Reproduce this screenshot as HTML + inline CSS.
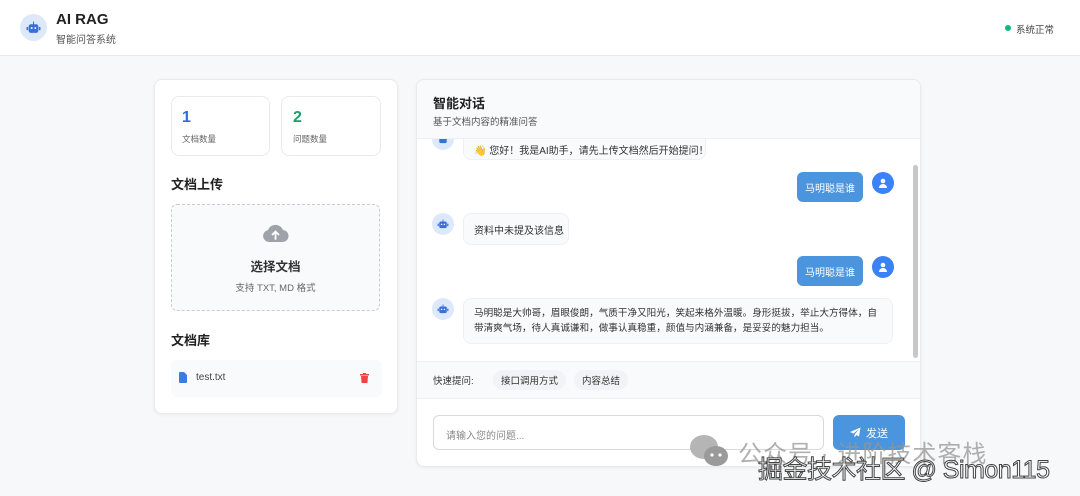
<!DOCTYPE html>
<html><head><meta charset="utf-8"><style>
*{box-sizing:border-box;margin:0;padding:0}
body{width:1080px;height:496px;overflow:hidden;background:#f7f8f9;font-family:"Liberation Sans","Noto Sans CJK SC",sans-serif;color:#222;position:relative}
.hdr{position:absolute;left:0;top:0;width:1080px;height:56px;background:#fff;border-bottom:1px solid #e6e8eb}
.abs{position:absolute}
.card{position:absolute;background:#fff;border:1px solid #e8eaed;border-radius:8px;box-shadow:0 1px 3px rgba(0,0,0,.05)}
.ava{position:absolute;width:22px;height:22px;border-radius:50%;background:#dde9fb;display:flex;align-items:center;justify-content:center}
.uava{position:absolute;width:22px;height:22px;border-radius:50%;background:#3b82f6;display:flex;align-items:center;justify-content:center}
.bb{position:absolute;left:463px;background:#f8fafc;border:1px solid #eef0f3;border-radius:8px;font-size:10px;color:#333;padding:0 10px;display:flex;align-items:center;white-space:nowrap}
.ub{position:absolute;left:797px;width:66px;height:30px;background:#4a95dd;border-radius:6px;color:#fff;font-size:10px;display:flex;align-items:center;justify-content:center}
</style></head><body>
<div class="hdr">
 <div class="abs" style="left:20px;top:14px;width:27px;height:27px;border-radius:50%;background:#dde9fb;display:flex;align-items:center;justify-content:center">
  <svg width="15" height="13" viewBox="0 0 14 12"><rect x="2.5" y="3" width="9" height="8" rx="2" fill="#3b6fd8"/><rect x="6.5" y="0.5" width="1" height="3" fill="#3b6fd8"/><rect x="0.5" y="5.5" width="1.5" height="3" fill="#3b6fd8"/><rect x="12" y="5.5" width="1.5" height="3" fill="#3b6fd8"/><circle cx="5.3" cy="6.5" r=".9" fill="#fff"/><circle cx="8.7" cy="6.5" r=".9" fill="#fff"/></svg>
 </div>
 <div class="abs" style="left:56px;top:11px;font-size:15px;font-weight:bold;color:#222">AI RAG</div>
 <div class="abs" style="left:56px;top:31px;font-size:10px;color:#555">智能问答系统</div>
 <div class="abs" style="left:1005px;top:25px;width:6px;height:6px;border-radius:50%;background:#10b981"></div>
 <div class="abs" style="left:1016px;top:22px;font-size:9.5px;color:#444">系统正常</div>
</div>

<div class="card" style="left:154px;top:79px;width:244px;height:335px"></div>
<div class="card" style="left:171px;top:96px;width:99px;height:60px;box-shadow:none"></div>
<div class="abs" style="left:182px;top:109px;font-size:16px;font-weight:bold;color:#2f6fdc">1</div>
<div class="abs" style="left:182px;top:133px;font-size:8.5px;color:#666">文档数量</div>
<div class="card" style="left:281px;top:96px;width:100px;height:60px;box-shadow:none"></div>
<div class="abs" style="left:293px;top:109px;font-size:16px;font-weight:bold;color:#16a06a">2</div>
<div class="abs" style="left:293px;top:133px;font-size:8.5px;color:#666">问题数量</div>
<div class="abs" style="left:171px;top:174px;font-size:13px;font-weight:bold">文档上传</div>
<div class="abs" style="left:171px;top:204px;width:209px;height:107px;border:1px dashed #c9ccd1;border-radius:6px;background:#f8fafc"></div>
<svg class="abs" style="left:262px;top:224px" width="27" height="19" viewBox="0 0 27 19"><path d="M7 18a6 6 0 0 1-1-11.9A8 8 0 0 1 21 6a6 6 0 0 1-1 12z" fill="#9ea3aa"/><path d="M13.5 15V8M10.5 10.5l3-3 3 3" stroke="#fff" stroke-width="1.8" fill="none" stroke-linecap="round"/></svg>
<div class="abs" style="left:171px;top:256px;width:209px;text-align:center;font-size:12.5px;font-weight:bold;color:#333">选择文档</div>
<div class="abs" style="left:171px;top:280px;width:209px;text-align:center;font-size:9.5px;color:#666">支持 TXT, MD 格式</div>
<div class="abs" style="left:171px;top:330px;font-size:13px;font-weight:bold">文档库</div>
<div class="abs" style="left:171px;top:360px;width:211px;height:37px;background:#f8fafc;border-radius:6px"></div>
<svg class="abs" style="left:179px;top:372px" width="8" height="11" viewBox="0 0 8 11"><path d="M0 1a1 1 0 0 1 1-1h4l3 3v7a1 1 0 0 1-1 1H1a1 1 0 0 1-1-1z" fill="#3b7be6"/></svg>
<div class="abs" style="left:196px;top:372px;font-size:10px;color:#444">test.txt</div>
<svg class="abs" style="left:360px;top:373px" width="9" height="10" viewBox="0 0 9 10"><rect x="0" y="1" width="9" height="1.5" fill="#ef4444"/><rect x="3" y="0" width="3" height="1.5" fill="#ef4444"/><path d="M1 3h7l-.6 7H1.6z" fill="#ef4444"/></svg>

<div class="card" style="left:416px;top:79px;width:505px;height:388px;overflow:hidden">
 <div class="abs" style="left:0;top:0;width:505px;height:59px;background:#f8fafc;border-bottom:1px solid #eef0f3"></div>
 <div class="abs" style="left:16px;top:13px;font-size:13px;font-weight:bold">智能对话</div>
 <div class="abs" style="left:16px;top:34px;font-size:9.5px;color:#555">基于文档内容的精准问答</div>
 <div class="abs" style="left:0;top:281px;width:505px;height:38px;background:#f8fafc;border-top:1px solid #eef0f3;border-bottom:1px solid #eef0f3"></div>
 <div class="abs" style="left:16px;top:293px;font-size:9.5px;color:#333">快速提问:</div>
 <div class="abs" style="left:76px;top:290px;padding:3px 8px;border-radius:10px;background:#f1f3f6;font-size:9.5px;color:#333">接口调用方式</div>
 <div class="abs" style="left:157px;top:290px;padding:3px 8px;border-radius:10px;background:#f1f3f6;font-size:9.5px;color:#333">内容总结</div>
 <div class="abs" style="left:496px;top:85px;width:5px;height:193px;background:#c8c8c8;border-radius:3px"></div>
 <div class="abs" style="left:16px;top:335px;width:391px;height:35px;border:1px solid #d6d9de;border-radius:6px;font-size:10px;color:#888;padding:11px 12px">请输入您的问题...</div>
 <div class="abs" style="left:416px;top:335px;width:72px;height:35px;background:#4a95dd;border-radius:6px;color:#fff;font-size:11px;display:flex;align-items:center;justify-content:center;gap:5px"><svg width="11" height="11" viewBox="0 0 11 11"><path d="M10.5.5L0 5l3.5 1.5L9 2 4.5 7.5v3l2-2.5 2.5 1.5z" fill="#fff"/></svg>发送</div>
</div>

<div class="ava" style="left:432px;top:128px;clip-path:inset(11px 0 0 0)"><svg width="12" height="10" viewBox="0 0 14 12"><rect x="2.5" y="3" width="9" height="8" rx="2" fill="#3b6fd8"/></svg></div>
<div class="bb" style="top:128px;height:32px;width:243px;clip-path:inset(11px 0 0 0);padding:10px 10px 0">👋 您好！我是AI助手，请先上传文档然后开始提问！</div>
<div class="ub" style="top:172px">马明聪是谁</div>
<div class="uava" style="left:872px;top:172px"><svg width="10" height="10" viewBox="0 0 10 10"><circle cx="5" cy="3" r="2.3" fill="#fff"/><path d="M1 10a4 4 0 0 1 8 0z" fill="#fff"/></svg></div>
<div class="ava" style="left:432px;top:213px"><svg width="12" height="10" viewBox="0 0 14 12"><rect x="2.5" y="3" width="9" height="8" rx="2" fill="#3b6fd8"/><rect x="6.5" y="0.5" width="1" height="3" fill="#3b6fd8"/><rect x="0.5" y="5.5" width="1.5" height="3" fill="#3b6fd8"/><rect x="12" y="5.5" width="1.5" height="3" fill="#3b6fd8"/><circle cx="5.3" cy="6.5" r=".9" fill="#fff"/><circle cx="8.7" cy="6.5" r=".9" fill="#fff"/></svg></div>
<div class="bb" style="top:213px;height:32px;width:106px">资料中未提及该信息</div>
<div class="ub" style="top:256px">马明聪是谁</div>
<div class="uava" style="left:872px;top:256px"><svg width="10" height="10" viewBox="0 0 10 10"><circle cx="5" cy="3" r="2.3" fill="#fff"/><path d="M1 10a4 4 0 0 1 8 0z" fill="#fff"/></svg></div>
<div class="ava" style="left:432px;top:298px"><svg width="12" height="10" viewBox="0 0 14 12"><rect x="2.5" y="3" width="9" height="8" rx="2" fill="#3b6fd8"/><rect x="6.5" y="0.5" width="1" height="3" fill="#3b6fd8"/><rect x="0.5" y="5.5" width="1.5" height="3" fill="#3b6fd8"/><rect x="12" y="5.5" width="1.5" height="3" fill="#3b6fd8"/><circle cx="5.3" cy="6.5" r=".9" fill="#fff"/><circle cx="8.7" cy="6.5" r=".9" fill="#fff"/></svg></div>
<div class="bb" style="top:298px;height:46px;width:430px;line-height:15px;font-size:9.6px;white-space:normal">马明聪是大帅哥，眉眼俊朗，气质干净又阳光，笑起来格外温暖。身形挺拔，举止大方得体，自带清爽气场，待人真诚谦和，做事认真稳重，颜值与内涵兼备，是妥妥的魅力担当。</div>

<svg class="abs" style="left:688px;top:433px" width="44" height="36" viewBox="0 0 44 36"><ellipse cx="16" cy="14" rx="14" ry="12" fill="#b5b5b5"/><ellipse cx="28" cy="23" rx="12" ry="10" fill="#9a9a9a"/><circle cx="24" cy="22" r="1.6" fill="#fff"/><circle cx="32" cy="22" r="1.6" fill="#fff"/></svg>
<div class="abs" style="left:738px;top:434px;font-size:24px;color:rgba(150,150,150,.75);letter-spacing:1px">公众号 · 进阶技术客栈</div>
<div class="abs" style="left:758px;top:450px;font-size:25px;color:#fff;-webkit-text-stroke:1px #444;letter-spacing:-.5px">掘金技术社区 @ Simon115</div>
</body></html>
